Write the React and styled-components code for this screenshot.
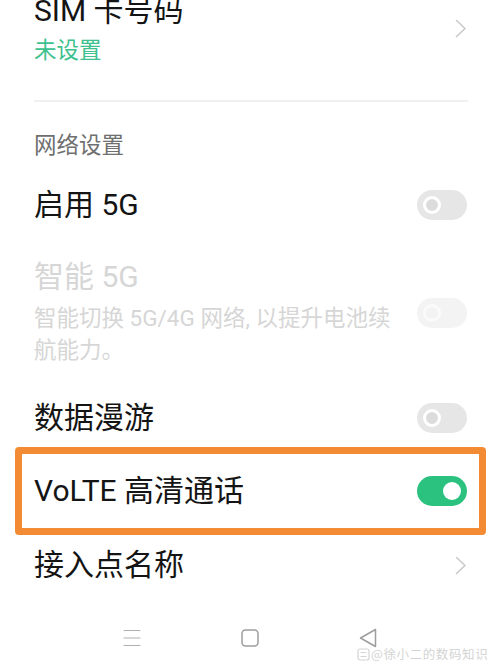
import React from "react";
import styled, { createGlobalStyle } from "styled-components";

const GlobalStyle = createGlobalStyle`
  html, body {
    margin: 0;
    padding: 0;
    background: #ffffff;
  }
  body {
    font-family: "Roboto", "Noto Sans CJK SC", sans-serif;
  }
`;

const Page = styled.div`
  position: relative;
  width: 500px;
  height: 668px;
  overflow: hidden;
  background: #ffffff;
  display: flex;
  flex-direction: column;
`;

const SimBlock = styled.div`
  display: flex;
  align-items: center;
  justify-content: space-between;
  margin-top: -7px;
  padding: 0 33px 36px 34px;
`;

const TextCol = styled.div`
  display: flex;
  flex-direction: column;
`;

const Title = styled.div`
  font-size: 30px;
  line-height: 36px;
  color: ${(p) => (p.disabled ? "#d6d6d6" : "#141414")};
`;

const Sub = styled.div`
  font-size: 22.5px;
  line-height: ${(p) => (p.tight ? "28px" : "32px")};
  margin-top: 7px;
  color: ${(p) => p.color || "#d6d6d6"};
  max-width: 372px;
`;

const Divider = styled.div`
  height: 2px;
  margin: 0 32px 0 34px;
  background: #f0f0f0;
`;

const SectionHead = styled.div`
  padding: 28px 34px 10px;
  font-size: 22.5px;
  line-height: 30px;
  color: #6f6f6f;
`;

const Row = styled.div`
  display: flex;
  align-items: center;
  justify-content: space-between;
  height: ${(p) => p.h}px;
  padding: 0 33px 0 34px;
  box-sizing: border-box;
`;

const SmartBlock = styled.div`
  display: flex;
  align-items: center;
  justify-content: space-between;
  padding: 19px 33px 22px 34px;
`;

const Highlight = styled.div`
  display: flex;
  align-items: center;
  justify-content: space-between;
  height: 88px;
  margin: 0 14px 0 15px;
  padding: 0 12px;
  border: 7px solid #f38b34;
  border-radius: 4px;
  box-sizing: border-box;
`;

const Track = styled.div`
  position: relative;
  flex: none;
  width: 50px;
  height: 30px;
  border-radius: 15px;
  background: ${(p) => (p.on ? "#2bc27f" : p.disabled ? "#f3f3f3" : "#e6e6e6")};
`;

const Knob = styled.div`
  position: absolute;
  top: 50%;
  left: ${(p) => (p.on ? "26px" : "6px")};
  width: 18px;
  height: 18px;
  margin-top: -9px;
  border-radius: 50%;
  box-sizing: border-box;
  background: ${(p) => (p.on ? "#ffffff" : p.disabled ? "#f3f3f3" : "#dcdcdc")};
  border: ${(p) => (p.on ? "none" : `3px solid ${p.disabled ? "#fafafa" : "#ffffff"}`)};
`;

const NavBar = styled.div`
  display: grid;
  grid-template-columns: repeat(3, 118px);
  justify-content: center;
  align-items: center;
  justify-items: center;
  height: 60px;
  margin-top: 13px;
`;

const Watermark = styled.div`
  position: absolute;
  left: 357px;
  top: 645px;
  display: flex;
  align-items: center;
  gap: 1px;
  font-family: "Noto Sans CJK SC", sans-serif;
  font-size: 12.5px;
  line-height: 18px;
  color: #d4d4d4;
  letter-spacing: 0.6px;
`;

const Toggle = ({ on, disabled }) => (
  <Track on={on} disabled={disabled}>
    <Knob on={on} disabled={disabled} />
  </Track>
);

const Chevron = () => (
  <svg width="12" height="19" viewBox="0 0 12 19" fill="none">
    <path d="M1.5 1.5 L10 9.5 L1.5 17.5" stroke="#c9c9c9" strokeWidth="1.6" strokeLinecap="round" strokeLinejoin="round" />
  </svg>
);

const MenuIcon = () => (
  <svg width="18" height="18" viewBox="0 0 18 18" fill="none" stroke="#b0b0b0" strokeWidth="1.2" strokeLinecap="round">
    <path d="M1 1.5 H17 M1 9 H17 M1 16.5 H17" />
  </svg>
);

const HomeIcon = () => (
  <svg width="18" height="18" viewBox="0 0 18 18" fill="none">
    <rect x="1" y="1" width="16" height="16" rx="3.5" stroke="#9d9d9d" strokeWidth="1.5" />
  </svg>
);

const BackIcon = () => (
  <svg width="18" height="20" viewBox="0 0 18 20" fill="none">
    <path d="M16.5 1.5 L1.5 10 L16.5 18.5 Z" stroke="#9d9d9d" strokeWidth="1.5" strokeLinejoin="round" />
  </svg>
);

const App = () => {
  return (
    <Page>
      <GlobalStyle />
      <SimBlock>
        <TextCol>
          <Title>SIM 卡号码</Title>
          <Sub tight color="#3ec18e">未设置</Sub>
        </TextCol>
        <Chevron />
      </SimBlock>
      <Divider />
      <SectionHead>网络设置</SectionHead>
      <Row h={70}>
        <Title>启用 5G</Title>
        <Toggle />
      </Row>
      <SmartBlock>
        <TextCol>
          <Title disabled>智能 5G</Title>
          <Sub>智能切换 5G/4G 网络, 以提升电池续航能力。</Sub>
        </TextCol>
        <Toggle disabled />
      </SmartBlock>
      <Row h={59}>
        <Title>数据漫游</Title>
        <Toggle />
      </Row>
      <Highlight>
        <Title>VoLTE 高清通话</Title>
        <Toggle on />
      </Highlight>
      <Row h={60}>
        <Title>接入点名称</Title>
        <Chevron />
      </Row>
      <NavBar>
        <MenuIcon />
        <HomeIcon />
        <BackIcon />
      </NavBar>
      <Watermark>
        <svg width="13" height="13" viewBox="0 0 13 13" fill="none" stroke="#d4d4d4" strokeWidth="1.2">
          <rect x="1" y="1" width="11" height="11" rx="2" />
          <path d="M3.5 4.5 H9.5 M3.5 8.5 H9.5" />
        </svg>
        <span>@徐小二的数码知识</span>
      </Watermark>
    </Page>
  );
};

export default App;
